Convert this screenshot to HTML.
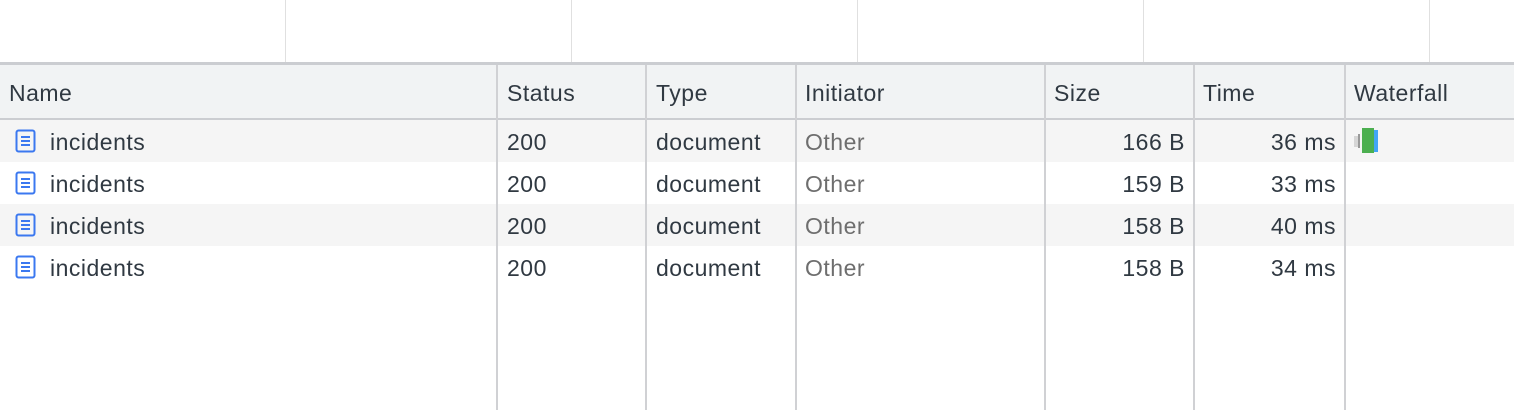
<!DOCTYPE html><html><head><style>
body{margin:0;width:1514px;height:410px;background:#fff;font-family:"Liberation Sans",sans-serif;font-size:23px;letter-spacing:0.5px;color:#303942;position:relative;overflow:hidden}
.a{position:absolute}
.vl{position:absolute;width:1px;background:#e0e0e0;top:0;height:62px}
.cl{position:absolute;width:2px;background:#d0d1d4;top:65px;height:345px}
.t{position:absolute;white-space:nowrap}
.r{text-align:right}
</style></head><body>
<div class="vl" style="left:285px"></div><div class="vl" style="left:571px"></div><div class="vl" style="left:857px"></div><div class="vl" style="left:1143px"></div><div class="vl" style="left:1429px"></div>
<div class="a" style="left:0;top:62px;width:1514px;height:3px;background:#cbcdd1"></div>
<div class="a" style="left:0;top:65px;width:1514px;height:53px;background:#f1f3f4"></div>
<div class="a" style="left:0;top:118px;width:1514px;height:2px;background:#cbcdd1"></div>
<div class="a" style="left:0;top:120px;width:1514px;height:42px;background:#f5f5f5"></div>
<div class="a" style="left:0;top:204px;width:1514px;height:42px;background:#f5f5f5"></div>
<div class="cl" style="left:496px"></div><div class="cl" style="left:645px"></div><div class="cl" style="left:795px"></div><div class="cl" style="left:1044px"></div><div class="cl" style="left:1193px"></div><div class="cl" style="left:1344px"></div>
<div class="t" style="left:9px;top:80px">Name</div>
<div class="t" style="left:507px;top:80px">Status</div>
<div class="t" style="left:656px;top:80px">Type</div>
<div class="t" style="left:805px;top:80px">Initiator</div>
<div class="t" style="left:1054px;top:80px">Size</div>
<div class="t" style="left:1203px;top:80px">Time</div>
<div class="t" style="left:1354px;top:80px">Waterfall</div>
<div class="a" style="left:1354px;top:136px;width:4px;height:11px;background:#d6d6d6"></div>
<div class="a" style="left:1358px;top:134px;width:2px;height:14px;background:#999"></div>
<div class="a" style="left:1362px;top:128px;width:12px;height:25px;background:#4caf50"></div>
<div class="a" style="left:1374px;top:130px;width:4px;height:22px;background:#42a5f5"></div>
<script>
var d=[["166 B","36 ms"],["159 B","33 ms"],["158 B","40 ms"],["158 B","34 ms"]],h="";
d.forEach(function(r,i){var y=120+i*42,ty=y+9;
h+='<svg class="a" style="left:15px;top:'+(y+9)+'px" width="22" height="24" viewBox="0 0 22 24"><rect x="1.5" y="1.5" width="18" height="21" rx="2" fill="none" stroke="#3b78f0" stroke-width="2"/><path d="M6 8h9M6 12h9M6 16h9" stroke="#3b78f0" stroke-width="2"/></svg>';
h+='<div class="t" style="left:50px;top:'+ty+'px">incidents</div><div class="t" style="left:507px;top:'+ty+'px">200</div><div class="t" style="left:656px;top:'+ty+'px">document</div><div class="t" style="left:805px;top:'+ty+'px;color:#6e6e6e">Other</div>';
h+='<div class="t r" style="left:1054px;width:131px;top:'+ty+'px">'+r[0]+'</div><div class="t r" style="left:1203px;width:133px;top:'+ty+'px">'+r[1]+'</div>';});
document.write(h);
</script>
</body></html>
